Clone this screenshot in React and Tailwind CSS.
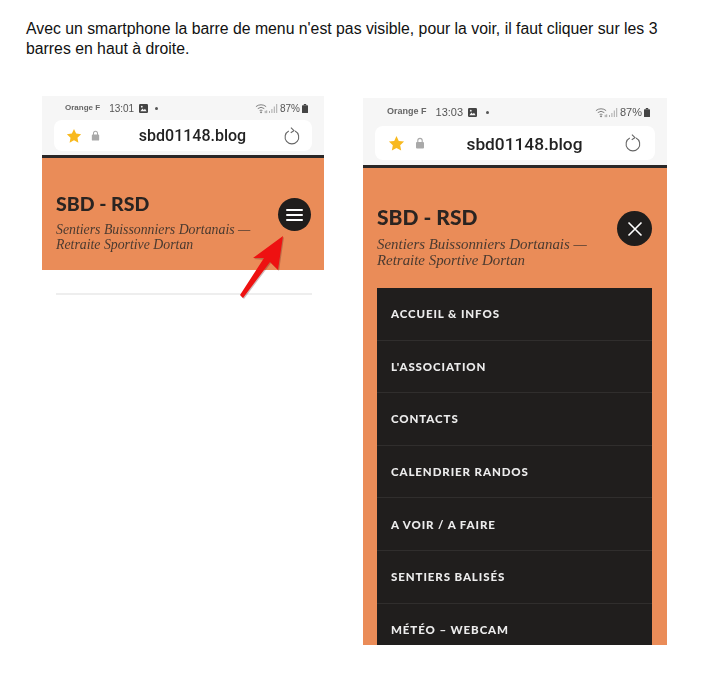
import React from "react";

const menuItems = [
  "Accueil & infos",
  "L'association",
  "Contacts",
  "Calendrier randos",
  "A voir / A faire",
  "Sentiers balisés",
  "Météo – Webcam",
];

function StatusIcons({ size = 11 }) {
  return (
    <div className="flex items-center gap-[1px]">
      {/* wifi */}
      <svg width={size + 2} height={size} viewBox="0 0 14 11" fill="none" stroke="#777" strokeWidth="1">
        <path d="M1 3.5a8.5 8.5 0 0 1 11 0" />
        <path d="M3 5.6a5.6 5.6 0 0 1 7 0" />
        <path d="M5 7.7a2.6 2.6 0 0 1 3 0" />
        <circle cx="6.5" cy="9.6" r="0.6" fill="#777" />
        <path d="M11 8v2.5M12.6 7.5v3" strokeWidth="0.7" />
      </svg>
      {/* reseau */}
      <svg width={size - 2} height={size} viewBox="0 0 9 11" fill="#aaa">
        <rect x="0" y="8" width="1" height="2" />
        <rect x="2.4" y="6" width="1" height="4" />
        <rect x="4.8" y="3.5" width="1" height="6.5" />
        <rect x="7.2" y="1" width="1" height="9" />
      </svg>
    </div>
  );
}

function Battery() {
  return (
    <svg width="6" height="9" viewBox="0 0 6 9" fill="#444">
      <rect x="1.8" y="0" width="2.4" height="1.2" />
      <rect x="0" y="1.2" width="6" height="7.8" rx="0.6" />
    </svg>
  );
}

function ImageIcon() {
  return (
    <svg width="9" height="9" viewBox="0 0 9 9">
      <rect x="0" y="0" width="9" height="9" rx="1.2" fill="#444" />
      <path d="M1.4 7.2 3.4 4.6 4.8 6 6 4.8l1.6 2.4z" fill="#f5f5f5" />
      <circle cx="2.8" cy="2.7" r="0.9" fill="#f5f5f5" />
    </svg>
  );
}

function Star({ size }) {
  return (
    <svg width={size} height={size} viewBox="0 0 24 24" fill="#f8b91f">
      <path d="M12 1.5l3.2 6.9 7.5.9-5.5 5.2 1.4 7.5L12 18.3l-6.6 3.7 1.4-7.5L1.3 9.3l7.5-.9z" />
    </svg>
  );
}

function Lock({ size }) {
  return (
    <svg width={size} height={size} viewBox="0 0 10 12" fill="none">
      <path d="M2.8 5.5V3.6a2.2 2.2 0 0 1 4.4 0v1.9" stroke="#a9a9a9" strokeWidth="1.1" />
      <rect x="1" y="5" width="8" height="6.5" rx="1" fill="#a9a9a9" />
    </svg>
  );
}

function Reload({ size }) {
  return (
    <svg width={size} height={size} viewBox="0 0 20 20" fill="none" stroke="#666" strokeWidth="1.2">
      <path d="M6.4 4.4a7.6 7.6 0 1 0 7 0" />
      <path d="M8.8 0.6l3.4 3.4-3.6 2.4" />
    </svg>
  );
}

function LeftPhone() {
  return (
    <div className="relative w-[282px] h-[204px] shrink-0 blur-[0.35px]">
      <div className="bg-[#f6f6f6] h-[59px] px-[12px] flex flex-col">
        <div className="h-[24px] flex items-center justify-between pl-[11px] pr-[4px]">
          <div className="flex items-center">
            <span className="text-[8px] font-bold text-[#666]">Orange F</span>
            <span className="text-[10px] text-[#555] ml-[9px] mr-[5px]">13:01</span>
            <ImageIcon />
            <span className="ml-[7px] w-[3px] h-[3px] rounded-full bg-[#555]" />
          </div>
          <div className="flex items-center gap-[2px]">
            <StatusIcons />
            <span className="text-[10px] text-[#555]">87%</span>
            <Battery />
          </div>
        </div>
        <div className="h-[31px] bg-white rounded-[8px] flex items-center pl-[12px] pr-[11px]">
          <Star size={16} />
          <span className="ml-[8px]"><Lock size={11} /></span>
          <span className="flex-1 text-center text-[16px] text-[#222] pl-[1px] font-['Roboto',sans-serif] font-medium">sbd01148.blog</span>
          <Reload size={18} />
        </div>
      </div>
      <div className="h-[3px] bg-[#2a2727]" />
      <div className="bg-[#ea8c58] h-[112px] pl-[14px] pr-[13px] pt-[35px] flex justify-between">
        <div>
          <h1 className="text-[19.5px] leading-[22px] font-black text-[#2a2421] font-['Lato',sans-serif]">SBD - RSD</h1>
          <p className="mt-[7px] text-[13.8px] leading-[15px] italic text-[#4a3a30] font-['Liberation_Serif',serif]">
            Sentiers Buissonniers Dortanais —<br />Retraite Sportive Dortan
          </p>
        </div>
        <button className="w-[33px] h-[33px] mt-[5px] rounded-full bg-[#1f1d1c] flex flex-col items-center justify-center gap-[3px] shrink-0">
          <span className="block w-[17px] h-[2px] bg-white rounded" />
          <span className="block w-[17px] h-[2px] bg-white rounded" />
          <span className="block w-[17px] h-[2px] bg-white rounded" />
        </button>
      </div>
      <div className="ml-[14px] mr-[12px] mt-[23px] border-t-2 border-[#eeeeee]" />
      {/* fleche rouge */}
      <svg className="absolute left-[190px] top-[136px]" width="60" height="72" viewBox="0 0 60 72">
        <path d="M8 63 L32 27 L21 26 L51 4 L46 38 L38 30 L11 66 Z" fill="#5d2020" opacity="0.3" transform="translate(1 1)" />
        <path d="M8 63 L32 26 L21 26 L51 4 L46 38 L38 30 L11 66 Z" fill="#ee1111" />
      </svg>
    </div>
  );
}

function RightPhone() {
  return (
    <div className="w-[304px] h-[547px] mt-[2px] shrink-0 flex flex-col overflow-hidden blur-[0.35px]">
      <div className="bg-[#f6f6f6] h-[67px] px-[12px] flex flex-col shrink-0">
        <div className="h-[28px] flex items-center justify-between pl-[12px] pr-[5px]">
          <div className="flex items-center">
            <span className="text-[9px] font-bold text-[#666]">Orange F</span>
            <span className="text-[11px] text-[#555] ml-[9px] mr-[5px]">13:03</span>
            <ImageIcon />
            <span className="ml-[9px] w-[3px] h-[3px] rounded-full bg-[#555]" />
          </div>
          <div className="flex items-center gap-[2px]">
            <StatusIcons />
            <span className="text-[11px] text-[#555]">87%</span>
            <Battery />
          </div>
        </div>
        <div className="h-[34px] bg-white rounded-[8px] flex items-center pl-[13px] pr-[13px]">
          <Star size={17} />
          <span className="ml-[9px]"><Lock size={12} /></span>
          <span className="flex-1 text-center text-[17.3px] leading-[22px] pt-[2px] text-[#222] pr-[1px] font-['Roboto',sans-serif] font-medium">sbd01148.blog</span>
          <Reload size={18} />
        </div>
      </div>
      <div className="h-[3px] bg-[#2a2727] shrink-0" />
      <div className="bg-[#ea8c58] flex-1 pl-[14px] pr-[15px] pt-[37px] min-h-0">
        <div className="flex justify-between">
          <div>
            <h1 className="text-[21px] leading-[24px] font-black text-[#2a2421] font-['Lato',sans-serif]">SBD - RSD</h1>
            <p className="mt-[7px] text-[14.9px] leading-[16px] italic text-[#4a3a30] font-['Liberation_Serif',serif]">
              Sentiers Buissonniers Dortanais —<br />Retraite Sportive Dortan
            </p>
          </div>
          <button className="w-[35px] h-[35px] mt-[6px] rounded-full bg-[#1f1d1c] flex items-center justify-center shrink-0">
            <svg width="16" height="16" viewBox="0 0 16 16" stroke="white" strokeWidth="1.6">
              <path d="M1.5 1.5l13 13M14.5 1.5l-13 13" />
            </svg>
          </button>
        </div>
        <ul className="mt-[20px] bg-[#201e1d]">
          {menuItems.map((item) => (
            <li
              key={item}
              className="h-[52.6px] px-[14px] flex items-center border-b border-[#302e2d] text-[11.5px] font-black uppercase tracking-[0.9px] text-[#ececec] font-['Lato',sans-serif]"
            >
              {item}
            </li>
          ))}
        </ul>
      </div>
    </div>
  );
}

export default function App() {
  return (
    <div className="w-[707px] h-[674px] bg-white overflow-hidden font-['Liberation_Sans',sans-serif]">
      <p className="pt-[19px] pl-[26px] pr-[40px] text-[15.8px] leading-[20px] text-[#111]">
        Avec un smartphone la barre de menu n'est pas visible, pour la voir, il faut cliquer sur les 3 barres en haut à droite.
      </p>
      <div className="mt-[37px] pl-[42px] flex items-start gap-[39px]">
        <LeftPhone />
        <RightPhone />
      </div>
    </div>
  );
}
